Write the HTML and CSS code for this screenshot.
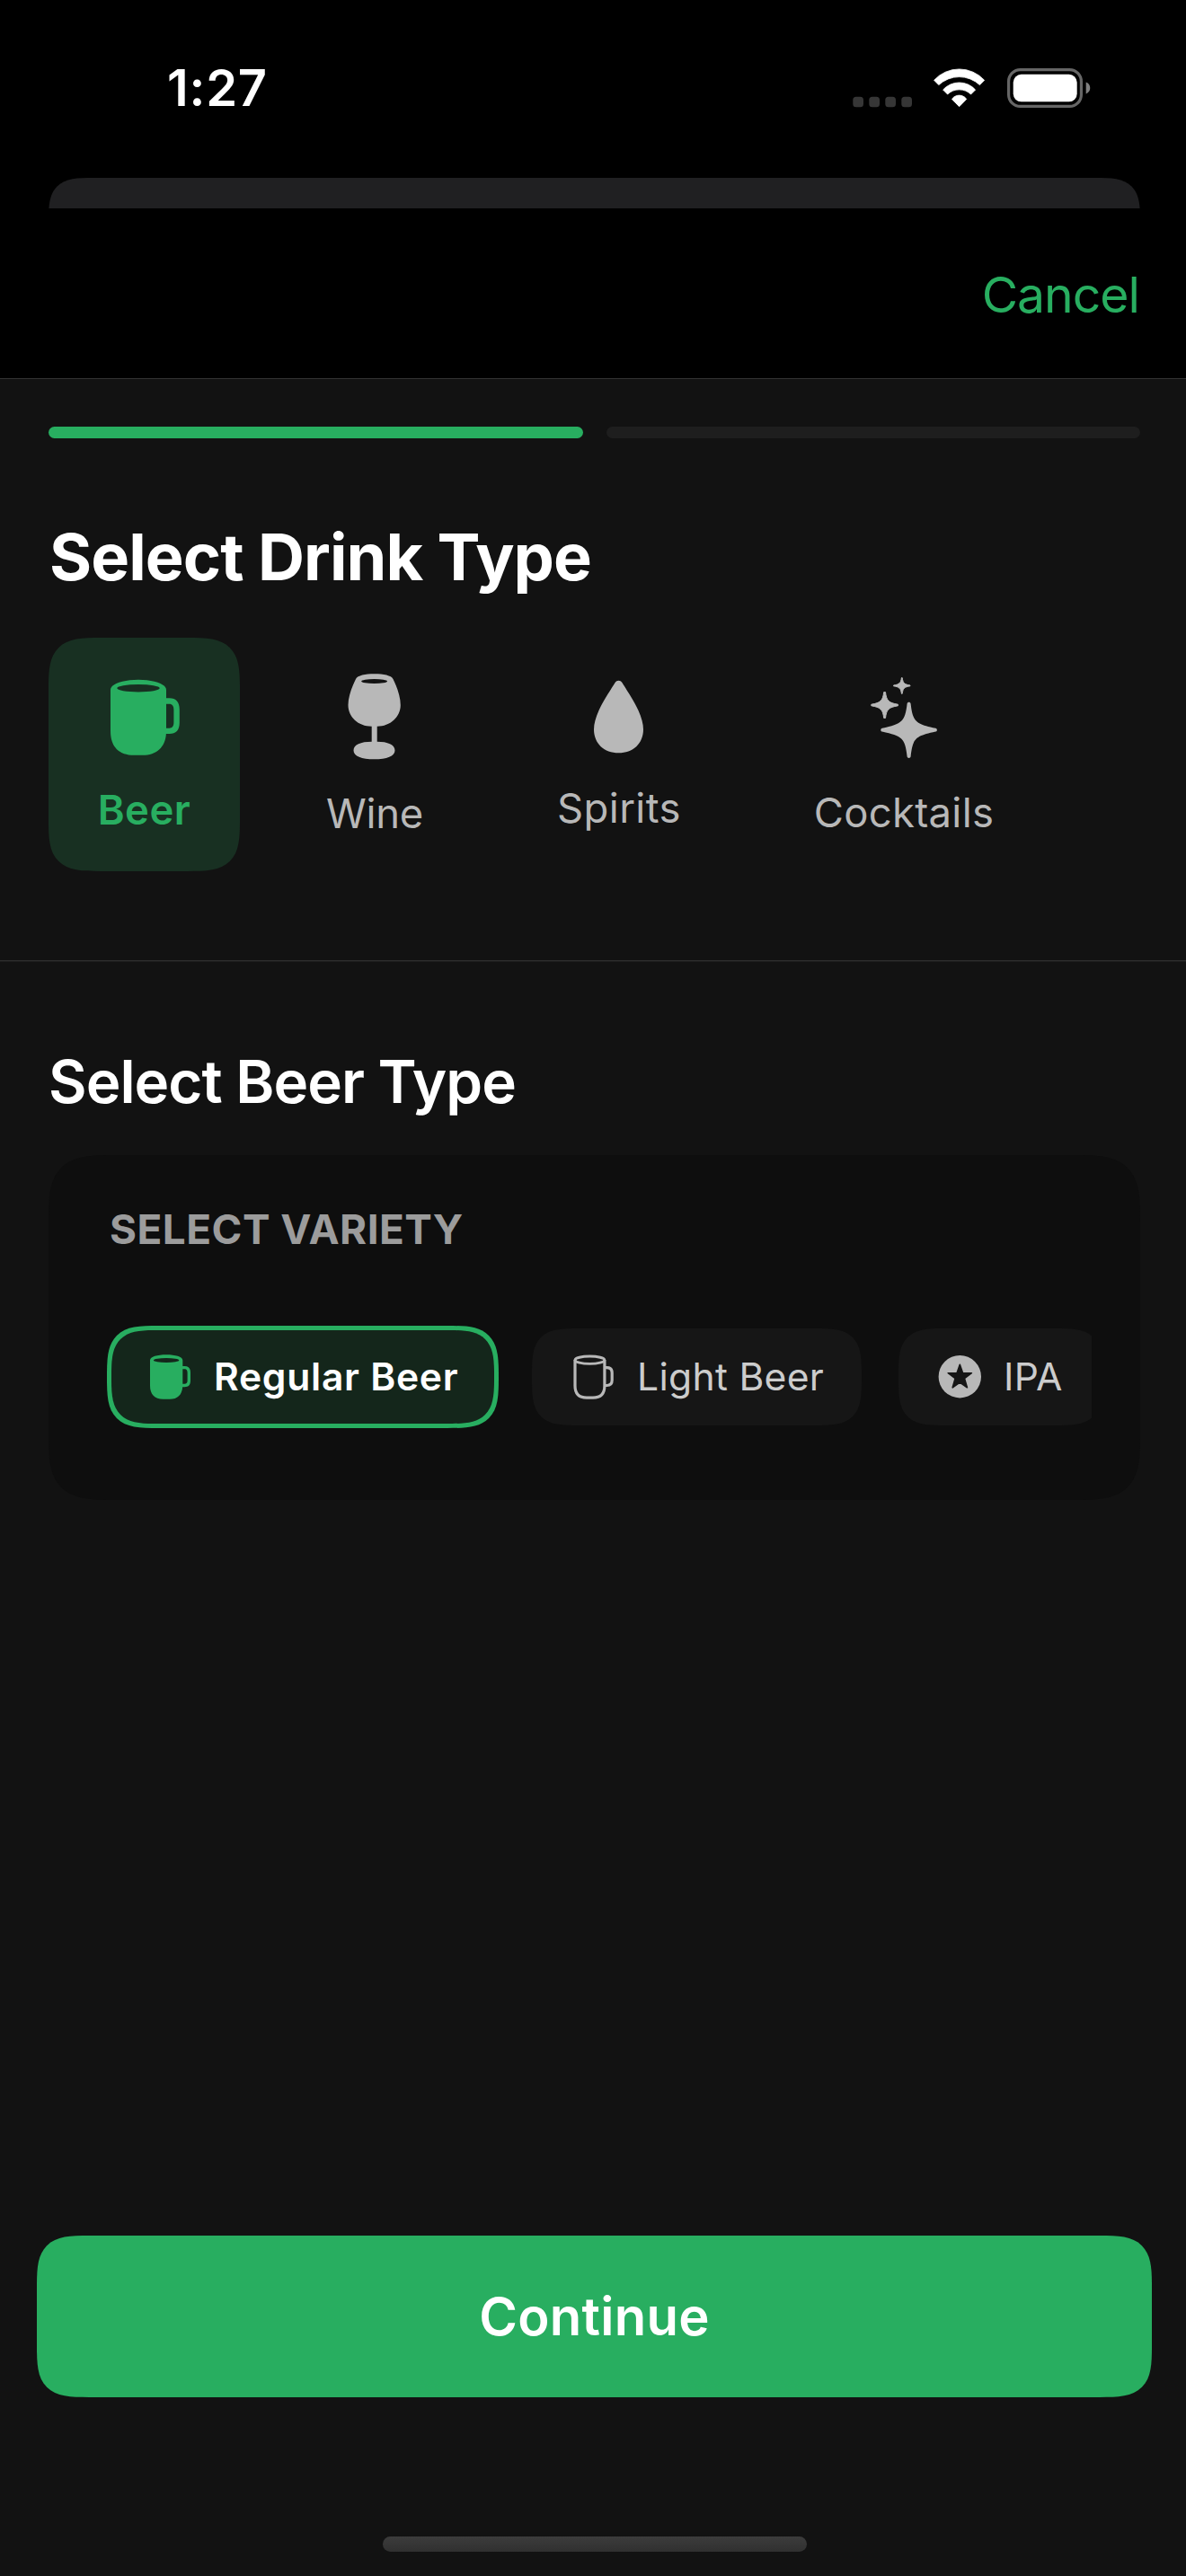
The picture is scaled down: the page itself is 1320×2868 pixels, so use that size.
FILE: index.html
```html
<!DOCTYPE html>
<html lang="en">
<head>
<meta charset="utf-8">
<title>Select Drink</title>
<link rel="stylesheet" href="styles.css">
</head>
<body>
<div class="screen">
  <header class="status-bar">
    <span class="time">1:27</span>
    <svg class="status-icons" viewBox="945 70 275 56" aria-hidden="true">
      <g fill="#363636">
        <rect x="949.3" y="107.7" width="11.7" height="11.6" rx="3.6"/>
        <rect x="967.3" y="107.7" width="11.7" height="11.6" rx="3.6"/>
        <rect x="985.3" y="107.7" width="11.7" height="11.6" rx="3.6"/>
        <rect x="1003.3" y="107.7" width="11.7" height="11.6" rx="3.6"/>
      </g>
      <g fill="#fff" stroke="#fff" stroke-width=".8" stroke-linejoin="round">
        <path d="M1039.6 89.3A37.9 37.9 0 0 1 1095.6 89.3L1090.4 94.6A33.4 33.4 0 0 0 1044.8 94.6Z"/>
        <path d="M1049.6 100A24.1 24.1 0 0 1 1085.6 100L1080.6 105A19 19 0 0 0 1054.6 105Z"/>
        <path d="M1059.5 110.4A9.8 9.8 0 0 1 1075.7 110.4L1067.6 118.7Z"/>
      </g>
      <rect x="1122.6" y="77.6" width="80.8" height="40.8" rx="13" fill="none" stroke="#666" stroke-width="3.2"/>
      <rect x="1127.7" y="82.8" width="71" height="30.5" rx="9" fill="#fff"/>
      <path d="M1208.7 91.6C1214.8 93.6 1214.8 102.4 1208.7 104.4Z" fill="#808080"/>
    </svg>
  </header>
  <div class="sheet-behind"><div class="sheet-behind-card"></div></div>
  <nav class="nav-bar"><a class="cancel">Cancel</a></nav>

  <main class="content">
    <div class="progress"><span class="step step-done"></span><span class="step"></span></div>
    <h1 class="title">Select Drink Type</h1>

    <div class="tabs">
      <div class="tab tab-beer tab-selected">
        <svg viewBox="115 750 90 100" aria-hidden="true">
          <path fill="currentColor" fill-rule="evenodd" d="M122 768C122 761.5 136 756.7 153 756.7S184 761.5 184 768V777.3H187.5C195 777.3 198.8 781.5 198.8 790V804.5C198.8 813 195 817 187.5 817H183.9C183 832 173 840.8 158 840.8H148C132 840.8 122 832 122 814ZM184 783.7V810.7H187.3C190.8 810.7 192.4 808.5 192.4 804V790.5C192.4 786 190.8 783.7 187.3 783.7Z"/>
          <ellipse cx="153" cy="766.2" rx="23.7" ry="4.2" fill="#183022"/>
        </svg>
        <span class="tab-label">Beer</span>
      </div>
      <div class="tab tab-wine">
        <svg viewBox="371.5 750 90 100" aria-hidden="true">
          <path fill="currentColor" d="M395.5 756C397.5 752 406 750.3 416.2 750.3S435 752 437 756C441.5 765 445.3 776 445.3 785C445.3 798 434 808.7 419.2 808.7V825.7C431 825.7 439 829 439 835.4S430 845.2 416 845.2S393 841.8 393 835.4S401 825.7 413.2 825.7V808.7C398 808.7 387 798 387 785C387 776 391 765 395.5 756Z"/>
          <ellipse cx="416.1" cy="758.5" rx="14.4" ry="2.5" fill="#121212"/>
        </svg>
        <span class="tab-label">Wine</span>
      </div>
      <div class="tab tab-spirits">
        <svg viewBox="644 750 90 100" aria-hidden="true">
          <path fill="currentColor" d="M684.6 760C686.6 757 690.4 757 692.4 760C698 769 706 781 710.5 791C714 799 716 806 716 812C716 828 704.5 838.3 688.5 838.3S661 828 661 812C661 806 663 799 666.5 791C671 781 679 769 684.6 760Z"/>
        </svg>
        <span class="tab-label">Spirits</span>
      </div>
      <div class="tab tab-cocktails">
        <svg viewBox="961 750 90 100" aria-hidden="true">
          <g fill="currentColor" stroke="currentColor">
            <path stroke="none" d="M1009.6 783.5C1009.9 781.3 1013.3 781.3 1013.6 783.5C1015.8 803 1019 806 1041.3 810.8C1043.4 811.2 1043.4 814.2 1041.3 814.6C1019 819.5 1015.8 822 1013.6 842.3C1013.3 844.4 1009.9 844.4 1009.6 842.3C1007.4 822 1004 819.5 981.8 814.6C979.8 814.2 979.8 811.2 981.8 810.8C1004 806 1007.4 803 1009.6 783.5Z"/>
            <path stroke-width="1" stroke-linejoin="round" d="M983.7 770.6H985.5C986.6 780 989 782.6 999.4 784.2V785.8C989 787.5 986.6 790 985.5 799.4H983.7C982.6 790 980 787.5 969.8 785.8V784.2C980 782.6 982.6 780 983.7 770.6Z"/>
            <path stroke-width="1" stroke-linejoin="round" d="M1003.4 754.6H1004.2C1005 760.5 1006.5 762 1013 763V763.8C1006.5 764.8 1005 766.5 1004.2 772.3H1003.4C1002.6 766.5 1001 764.8 994.5 763.8V763C1001 762 1002.6 760.5 1003.4 754.6Z"/>
          </g>
        </svg>
        <span class="tab-label">Cocktails</span>
      </div>
    </div>

    <hr class="divider">
    <h2 class="subtitle">Select Beer Type</h2>

    <section class="panel">
      <h3 class="panel-label">SELECT VARIETY</h3>
      <div class="chips">
        <div class="chip chip-selected">
          <svg class="chip-icon" viewBox="165 1507 50 54" aria-hidden="true">
            <path fill="#28ae60" fill-rule="evenodd" d="M167 1515.5C167 1511.5 175 1509.3 185.1 1509.3S203.3 1511.5 203.3 1515.5V1522H205.5C209.8 1522 212 1524.5 212 1529V1538C212 1542.8 209.8 1545.2 205.5 1545.2H203.2C202.5 1554 197.5 1558.8 189 1558.8H181.5C172 1558.8 167 1553 167 1544ZM203.3 1525.3V1541.8H205.3C207.6 1541.8 208.6 1540.6 208.6 1538V1529.2C208.6 1526.5 207.6 1525.3 205.3 1525.3Z"/>
            <ellipse cx="185.1" cy="1515.5" rx="14.2" ry="2.4" fill="#14261b"/>
          </svg>
          <span class="chip-text chip-text-selected">Regular Beer</span>
        </div>
        <div class="chip chip-light">
          <svg class="chip-icon" viewBox="636 1507 50 54" aria-hidden="true">
            <g fill="none" stroke="#b8b8b8" stroke-width="3.2">
              <ellipse cx="656.4" cy="1515.2" rx="16.4" ry="4.2" stroke-width="2.9"/>
              <path d="M640 1515V1544C640 1552.5 644.5 1557.1 653 1557.1H660C668.5 1557.1 672.9 1552.5 672.9 1544V1515M672.9 1523.6H675.5C679.5 1523.6 681.2 1525.6 681.2 1529.5V1537.5C681.2 1541.5 679.5 1543.5 675.5 1543.5H672.9"/>
            </g>
          </svg>
          <span class="chip-text">Light Beer</span>
        </div>
        <div class="chip chip-ipa">
          <svg class="chip-icon chip-icon-star" viewBox="1042 1507 52 54" aria-hidden="true">
            <circle cx="1068.3" cy="1533.7" r="23.7" fill="#b8b8b8"/>
            <path fill="#161616" stroke="#161616" stroke-width="1.6" stroke-linejoin="round" d="M1068.3 1520.2L1071.5 1529.5L1081.4 1529.7L1073.5 1535.7L1076.4 1545.8L1068.3 1540L1060.2 1545.8L1063.1 1535.7L1055.2 1529.7L1065.1 1529.5Z"/>
          </svg>
          <span class="chip-text">IPA</span>
        </div>
      </div>
    </section>

    <button class="continue" type="button">Continue</button>
    <div class="home-indicator"></div>
  </main>
</div>
</body>
</html>
```
FILE: styles.css
```css
* { box-sizing: border-box; }

body {
  margin: 0;
  background: #121212;
  font-family: Inter, "Liberation Sans", sans-serif;
  color: #fff;
}

h1, h2, h3 { margin: 0; }
svg { display: block; flex: none; }

.screen {
  display: flex;
  flex-direction: column;
  width: 1320px;
  height: 2868px;
  overflow: hidden;
  background: #000;
}

.status-bar {
  display: flex;
  justify-content: space-between;
  height: 198px;
  padding: 70px 100px 0 186px;
}
.time {
  font-size: 56px;
  font-weight: 600;
  line-height: 57px;
  letter-spacing: 0.8px;
}
.status-icons { width: 275px; height: 56px; }

.sheet-behind {
  height: 34px;
  margin: 0 51px 0 54px;
  overflow: hidden;
}
.sheet-behind-card {
  height: 110px;
  background: #202022;
  border-radius: 50px;
  corner-shape: superellipse(1.7);
}

.nav-bar {
  display: flex;
  justify-content: flex-end;
  height: 190px;
  padding: 63px 52px 0 0;
  border-bottom: 1px solid #333;
}
.cancel {
  color: #28ae60;
  font-size: 55.3px;
  line-height: 65px;
  letter-spacing: -1px;
}

.content {
  display: flex;
  flex-direction: column;
  flex: 1;
  background: #121212;
}

.progress {
  display: flex;
  gap: 26px;
  margin: 53px 51px 0 54px;
}
.step {
  flex: 1;
  height: 13px;
  border-radius: 6.5px;
  background: #1e1e1e;
}
.step-done { background: #28ae60; }

.title {
  margin: 87px 0 0 55px;
  font-size: 72px;
  font-weight: 700;
  line-height: 90px;
  letter-spacing: -0.9px;
}

.tabs {
  display: flex;
  gap: 42px;
  margin: 45px 0 0 54px;
}
.tab {
  display: flex;
  flex-direction: column;
  align-items: center;
  height: 260px;
  padding-top: 40px;
  border-radius: 58px;
  corner-shape: superellipse(1.7);
  color: #b8b8b8;
}
.tab svg { width: 90px; height: 100px; }
.tab-label {
  font-size: 45.4px;
  line-height: 55px;
}
.tab-selected { background: #183022; color: #28ae60; }
.tab-beer { width: 213px; }
.tab-beer .tab-label { margin-top: 24px; font-weight: 600; letter-spacing: 0.5px; }
.tab-wine { width: 216px; }
.tab-wine .tab-label { margin-top: 28px; letter-spacing: -0.25px; }
.tab-spirits { width: 244px; }
.tab-spirits .tab-label { margin-top: 22px; letter-spacing: 0.4px; }
.tab-cocktails { width: 306px; }
.tab-cocktails .tab-label { margin-top: 27px; letter-spacing: 0.3px; }

.divider {
  width: 100%;
  height: 2px;
  margin: 99px 0 0;
  border: 0;
  border-top: 1px solid #2e2e2e;
  background: #1d1d1d;
}

.subtitle {
  margin: 94px 0 0 54px;
  font-size: 65.5px;
  font-weight: 600;
  line-height: 80px;
  letter-spacing: -0.96px;
}

.panel {
  height: 384px;
  margin: 41px 51px 0 54px;
  padding: 54px 54px 0 65px;
  border-radius: 74px;
  corner-shape: superellipse(1.7);
  background: #0e0e0e;
}
.panel-label {
  padding-left: 3px;
  color: #9c9c9c;
  font-size: 45.8px;
  font-weight: 700;
  line-height: 57px;
  letter-spacing: 0.5px;
}

.chips {
  display: flex;
  align-items: center;
  height: 114px;
  margin-top: 79px;
  overflow: hidden;
}
.chip {
  display: flex;
  flex: none;
  align-items: center;
  gap: 23px;
  height: 108px;
  border-radius: 52px;
  corner-shape: superellipse(1.7);
  background: #161616;
}
.chip-selected {
  width: 436px;
  height: 114px;
  padding-left: 41px;
  border: 5px solid #28ae60;
  border-radius: 57px;
  background: #14261b;
}
.chip-light { width: 367px; margin-left: 37px; padding-left: 44px; }
.chip-ipa { width: 227px; margin-left: 41px; padding-left: 42px; }
.chip-icon { width: 50px; height: 54px; }
.chip-icon-star { width: 52px; }
.chip-text {
  color: #ccc;
  font-size: 42.6px;
  line-height: 54px;
  letter-spacing: 0.3px;
  white-space: nowrap;
}
.chip-text-selected { color: #fff; font-weight: 600; letter-spacing: 0.72px; }

.continue {
  height: 180px;
  margin: auto 38px 0 41px;
  padding: 0;
  border: 0;
  border-radius: 58px;
  corner-shape: superellipse(1.7);
  background: #28ae60;
  color: #fff;
  font-family: inherit;
  font-size: 58px;
  font-weight: 600;
  line-height: 70px;
  letter-spacing: 0.25px;
}

.home-indicator {
  width: 472px;
  height: 17px;
  margin: 155px 0 27px 426px;
  border-radius: 9px;
  background: linear-gradient(#3c3c3c, #303030);
}
```
